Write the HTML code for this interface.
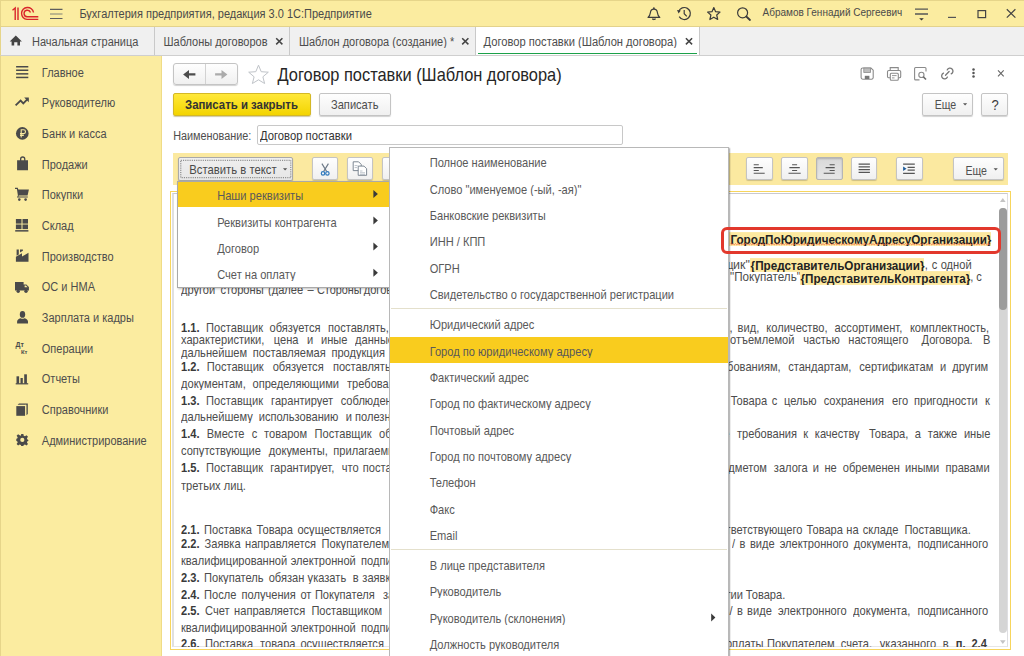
<!DOCTYPE html>
<html><head><meta charset="utf-8">
<style>
*{margin:0;padding:0;box-sizing:border-box}
html,body{width:1024px;height:656px;overflow:hidden;background:#fff}
body{font-family:"Liberation Sans",sans-serif;font-size:11px;color:#4d4d4d;position:relative}
.a{position:absolute}
.t{position:absolute;white-space:nowrap;line-height:16px;height:16px;transform:scaleY(1.15);transform-origin:0 50%;margin-top:-0.5px}
svg{position:absolute;overflow:visible}
/* top bar */
#top{left:0;top:0;width:1024px;height:27px;background:#fbeca0;border-top:1px solid #e6d58a;border-left:1px solid #e6d58a;border-bottom:1px solid #e3d28c}
#tabs{left:0;top:27px;width:1024px;height:29px;background:#f0f0f0;border-left:1px solid #e6d58a;border-bottom:1px solid #cfcfcf}
.tsep{position:absolute;top:27px;width:1px;height:28px;background:#c9c9c9}
#side{left:0;top:56px;width:162px;height:600px;background:#fbeca0;border-left:1px solid #e6d58a;border-right:1px solid #f0dc86}
.w{position:absolute;white-space:nowrap;transform-origin:0 50%;transform:scaleY(1.15);height:16px;margin-top:-1px;line-height:16px;font-size:11.1px;color:#4c4c4c}
.b{font-weight:bold;color:#3a3a3a}
.h{font-weight:bold;font-size:11.7px;color:#222;background:#fde9a0;line-height:12px;height:12px;margin-top:2.2px;padding-left:1px;margin-left:-1px}
.btn{position:absolute;border:1px solid #c4c4c4;border-radius:2px;background:linear-gradient(#fefefe,#f0f0f0);box-shadow:0 1px 1px rgba(0,0,0,.18)}
</style></head><body>

<!-- TOP BAR -->
<div id="top" class="a"></div>
<svg style="left:0;top:0" width="1024" height="27">
 <g fill="none" stroke="#d9252b" stroke-width="1.4">
  <path d="M12.5 10.2 L15.2 8 L15.2 20"/>
  <path d="M18 7.5 L18 20"/>
  <path d="M33.5 12.5 A6 6 0 1 0 27 19.4 L38.3 19.4"/>
  <path d="M30.5 12.5 A3.3 3.3 0 1 0 27 16.8 L38.3 16.8"/>
 </g>
 <g stroke="#5e5e5e" stroke-width="1.1">
  <path d="M50 9.4 H62.5 M50 18.5 H62.5"/>
 </g>
 <path d="M50 14 H62.5" stroke="#8a8a7a" stroke-width="1.1"/>
 <!-- bell -->
 <path d="M648 17.4 H659.8 C658.2 16 657.6 14.3 657.4 12.6 C657.2 10.4 656 9.1 653.9 9.1 C651.8 9.1 650.6 10.4 650.4 12.6 C650.2 14.3 649.6 16 648 17.4 Z" fill="none" stroke="#3c3c3c" stroke-width="1.15" stroke-linejoin="round"/>
 <circle cx="653.9" cy="8.2" r="0.9" fill="#3c3c3c"/>
 <path d="M652.2 19 Q653.9 20.5 655.6 19 Z" fill="#3c3c3c" stroke="#3c3c3c" stroke-width="0.8"/>
 <!-- history -->
 <g fill="none" stroke="#3c3c3c" stroke-width="1.2">
  <path d="M678.6 11.8 A6 6 0 1 1 679.2 16.6"/>
  <path d="M684.2 10 V13.7 L686.8 16.3"/>
 </g>
 <path d="M677 10 L680.8 10.4 L678.6 13.4 Z" fill="#3c3c3c"/>
 <!-- star -->
 <path d="M713.8 7.6 L715.6 11.7 L720 12.1 L716.7 15 L717.7 19.5 L713.8 17.2 L709.9 19.5 L710.9 15 L707.6 12.1 L712 11.7 Z" fill="none" stroke="#3c3c3c" stroke-width="1.2" stroke-linejoin="round"/>
 <!-- search -->
 <circle cx="742.6" cy="12.8" r="5" fill="none" stroke="#3c3c3c" stroke-width="1.2"/>
 <path d="M746.3 16.5 L750 20" stroke="#3c3c3c" stroke-width="1.8" stroke-linecap="round"/>
 <!-- menu -->
 <g stroke="#555" stroke-width="1.3"><path d="M915 9.2 H928 M915 14 H928"/></g>
 <path d="M919.2 18.2 H923.8 L921.5 20.6 Z" fill="#333"/>
 <!-- window controls -->
 <path d="M948 17.4 H956" stroke="#555" stroke-width="1.2"/>
 <rect x="978" y="10.6" width="7.6" height="7" fill="none" stroke="#444" stroke-width="1.2"/>
 <path d="M1006.8 9.2 L1015.4 17.6 M1015.4 9.2 L1006.8 17.6" stroke="#444" stroke-width="1.2"/>
</svg>
<div class="t" style="left:79.4px;top:5.4px;color:#4a4a4a">Бухгалтерия предприятия, редакция 3.0 1С:Предприятие</div>
<div class="t" style="left:762.5px;top:5.5px;font-size:10px;color:#4a4a4a">Абрамов Геннадий Сергеевич</div>

<!-- TABS -->
<div id="tabs" class="a"></div>
<div class="a" style="left:476px;top:27px;width:223px;height:28px;background:#fff"></div>
<div class="a" style="left:477.5px;top:52.6px;width:219.5px;height:1.8px;background:#1ba149"></div>
<div class="tsep" style="left:154px"></div>
<div class="tsep" style="left:289px"></div>
<div class="tsep" style="left:475px"></div>
<div class="tsep" style="left:699px"></div>
<svg style="left:0;top:27px" width="1024" height="29">
 <path d="M9.7 14.5 L15.8 8.6 L21.9 14.5 H20 V18.6 H17.4 V15.2 H14.2 V18.6 H11.6 V14.5 Z" fill="#444"/>
 <g stroke="#444" stroke-width="1.5">
  <path d="M276.2 11.2 L282.4 17.4 M282.4 11.2 L276.2 17.4"/>
  <path d="M462.2 11.2 L468.4 17.4 M468.4 11.2 L462.2 17.4"/>
  <path d="M685.9 11.2 L692.1 17.4 M692.1 11.2 L685.9 17.4"/>
 </g>
</svg>
<div class="t" style="left:32px;top:33.6px">Начальная страница</div>
<div class="t" style="left:163.5px;top:33.8px">Шаблоны договоров</div>
<div class="t" style="left:298.9px;top:33.8px">Шаблон договора (создание) *</div>
<div class="t" style="left:483.6px;top:33.8px;font-size:11.17px">Договор поставки (Шаблон договора)</div>
<!-- SIDEBAR -->
<div id="side" class="a"></div>
<svg style="left:0;top:0" width="162" height="656">
 <g fill="#4a4a4a" stroke="none">
  <!-- main -->
  <rect x="16.1" y="66" width="12.2" height="1.5"/><rect x="16.1" y="69.5" width="12.2" height="1.5"/><rect x="16.1" y="73.1" width="12.2" height="1.5"/><rect x="16.1" y="76.7" width="12.2" height="1.5"/>
  <!-- ruble -->
  <circle cx="22.3" cy="133.4" r="6.3"/>
  <!-- bag -->
  <path d="M17.1 160.3 H20 V159 A2.5 2.5 0 0 1 25.4 159 V160.3 H28 V170.3 H17.1 Z M21.3 160.3 H24.1 V159.2 A1.4 1.4 0 0 0 21.3 159.2 Z" fill-rule="evenodd"/>
  <!-- cart -->
  <path d="M15 187.8 H17.8 L18.3 189.6 H28.9 L27.6 195.6 H18.9 L18.3 196.6 H27.8 V197.6 H16.9 L17.9 195.6 L16.9 189 H15 Z"/>
  <circle cx="19.3" cy="199.6" r="1.3"/><circle cx="25.6" cy="199.6" r="1.3"/>
  <!-- sklad -->
  <rect x="15.9" y="219" width="5.6" height="4.6"/><rect x="22.5" y="219" width="5.5" height="4.6"/>
  <rect x="15.9" y="224.5" width="5.6" height="4.6"/><rect x="22.5" y="224.5" width="5.5" height="4.6"/>
  <rect x="15.2" y="230.1" width="13.2" height="1.5"/>
  <!-- factory -->
  <path d="M15.9 256.8 L22 253.3 V256.6 L28.5 252.8 V261.8 H15.9 Z"/>
  <path d="M16.6 249.6 H18.8 V254.6 L16.6 255.8 Z"/><path d="M20 249.6 H22.9 L22.9 250.8 L20 252.6 Z"/>
  <!-- truck -->
  <path d="M15 281.9 H23.6 V284.4 H26.4 L28.9 287 V290.6 H15 Z"/>
  <circle cx="18.2" cy="291.2" r="1.7"/><circle cx="26" cy="291.2" r="1.7"/>
  <!-- person -->
  <ellipse cx="22.5" cy="314.4" rx="2.7" ry="3.4"/>
  <path d="M17.1 323.6 V321.5 C17.1 319.4 19.4 318.4 20.8 318.2 C21.6 319 23.4 319 24.2 318.2 C25.8 318.4 28 319.4 28 321.5 V323.6 Z"/>
  <!-- chart -->
  <rect x="16.5" y="376.3" width="2.6" height="7.4"/><rect x="20.5" y="378" width="2.3" height="5.7"/><rect x="24.2" y="374.3" width="2.7" height="9.4"/>
  <rect x="15.7" y="383.2" width="12.5" height="1.2"/>
  <!-- books -->
  <rect x="16.3" y="406.1" width="8.8" height="9.7"/>
  <path d="M17.6 404.8 L19 403.4 H27.8 V413.9 L26.4 415.3 V404.8 Z"/>
 </g>
 <g fill="none" stroke="#4a4a4a">
  <path d="M15.6 105.4 L20.6 100.6 L23.3 103.4 L28 98.7" stroke-width="1.8"/>
 </g>
 <path d="M24.2 97.6 H28.8 V102.2 Z" fill="#4a4a4a"/>
 <!-- ruble sign -->
 <path d="M21.2 137.4 V129.8 H23.6 A1.9 1.9 0 0 1 23.6 133.6 H20 M20 135.4 H23.8" fill="none" stroke="#fbeca0" stroke-width="1.1"/>
 <!-- books gap -->
 <path d="M25.7 404.7 V415.8" stroke="#fbeca0" stroke-width="0.6"/>
 <!-- truck window -->
 <path d="M24.6 285.4 H26 L27.6 287.2 H24.6 Z" fill="#fbeca0"/>
 <!-- DT KT -->
 <text x="15.6" y="346.9" font-family="Liberation Sans" font-weight="bold" font-size="6.9" fill="#4a4a4a">Дт</text>
 <text x="21" y="354.3" font-family="Liberation Sans" font-weight="bold" font-size="5.9" fill="#4a4a4a">Кт</text>
 <!-- gear -->
 <g transform="translate(22.3 439.9)">
  <path d="M-1.1 -6 H1.1 L1.4 -4.2 L2.7 -3.6 L4.2 -4.7 L5.7 -3.2 L4.6 -1.6 L5.1 -0.3 L6 0 V1.1 L5.1 1.3 L4.6 2.6 L5.7 4.2 L4.2 5.7 L2.7 4.6 L1.4 5.2 L1.1 6 H-1.1 L-1.4 5.2 L-2.7 4.6 L-4.2 5.7 L-5.7 4.2 L-4.6 2.6 L-5.1 1.3 L-6 1.1 V-1.1 L-5.1 -1.3 L-4.6 -2.6 L-5.7 -4.2 L-4.2 -5.7 L-2.7 -4.6 L-1.4 -4.2 Z" fill="#4a4a4a"/>
  <circle cx="0" cy="0" r="2.1" fill="#fbeca0"/>
 </g>
</svg>
<div class="t" style="left:41.8px;top:64px">Главное</div>
<div class="t" style="left:41.8px;top:94.67px">Руководителю</div>
<div class="t" style="left:41.8px;top:125.33px">Банк и касса</div>
<div class="t" style="left:41.8px;top:156px">Продажи</div>
<div class="t" style="left:41.8px;top:186.67px">Покупки</div>
<div class="t" style="left:41.8px;top:217.33px">Склад</div>
<div class="t" style="left:41.8px;top:248px">Производство</div>
<div class="t" style="left:41.8px;top:278.67px">ОС и НМА</div>
<div class="t" style="left:41.8px;top:309.33px">Зарплата и кадры</div>
<div class="t" style="left:41.8px;top:340px">Операции</div>
<div class="t" style="left:41.8px;top:370.67px">Отчеты</div>
<div class="t" style="left:41.8px;top:401.33px">Справочники</div>
<div class="t" style="left:41.8px;top:432px">Администрирование</div>

<!-- FORM HEADER -->
<div class="btn" style="left:172.6px;top:63.3px;width:65.1px;height:21.5px;border-radius:3px"></div>
<div class="a" style="left:205px;top:64px;width:1px;height:20px;background:#d2d2d2"></div>
<svg style="left:0;top:0" width="1024" height="200">
 <path d="M183.1 74.4 L189 70 V73.3 H195.4 V75.5 H189 V78.9 Z" fill="#4d4d4d"/>
 <path d="M227.4 74.4 L221.5 70 V73.3 H215.1 V75.5 H221.5 V78.9 Z" fill="#ababab"/>
 <path d="M258.5 65.2 L261.2 71.7 L268.3 72.2 L262.9 76.8 L264.6 83.5 L258.5 79.8 L252.4 83.5 L254.1 76.8 L248.7 72.2 L255.8 71.7 Z" fill="none" stroke="#bfc3c8" stroke-width="1" stroke-linejoin="miter"/>
 <!-- save -->
 <g fill="none" stroke="#8a8a8a" stroke-width="1.1">
  <path d="M861.1 69.6 A1.6 1.6 0 0 1 862.7 68 H871 L873.2 70.2 V77.6 A1.6 1.6 0 0 1 871.6 79.2 H862.7 A1.6 1.6 0 0 1 861.1 77.6 Z"/>
 </g>
 <rect x="863.8" y="68" width="6.8" height="4.4" fill="#bdbdbd" stroke="#8a8a8a" stroke-width="0.8"/>
 <rect x="864.8" y="75.8" width="4.6" height="3.2" fill="#777"/>
 <!-- print -->
 <g fill="none" stroke="#8a8a8a" stroke-width="1.1">
  <path d="M890.2 70.5 V67.6 H898.2 V70.5"/>
  <path d="M890.2 77.8 H888.6 A1.3 1.3 0 0 1 887.5 76.5 V71.8 A1.3 1.3 0 0 1 888.8 70.5 H899.4 A1.3 1.3 0 0 1 900.7 71.8 V76.5 A1.3 1.3 0 0 1 899.4 77.8 H898.2"/>
  <rect x="890.3" y="73.2" width="8" height="7.1" rx="1" fill="#fff"/>
  <path d="M892 75.6 H896.6 M892 77.9 H894.5" stroke-width="0.9"/>
 </g>
 <!-- preview -->
 <g fill="none" stroke="#8a8a8a" stroke-width="1.1">
  <path d="M919.5 79.9 H915.6 A1 1 0 0 1 914.6 78.9 V68.5 A1 1 0 0 1 915.6 67.5 H925 A1 1 0 0 1 926 68.5 V71.5"/>
  <circle cx="921.4" cy="74.9" r="2.6"/>
  <path d="M923.3 76.8 L926 79.5" stroke-width="1.6" stroke="#6a6a6a"/>
 </g>
 <!-- link -->
 <g fill="none" stroke="#777" stroke-width="1.3" stroke-linecap="round">
  <path d="M947.2 69.9 A3 3 0 1 1 951.2 73.8"/>
  <path d="M943.5 73.1 A3 3 0 1 0 947.4 77.1"/>
  <path d="M945.5 75.3 L949.1 71.5"/>
 </g>
 <!-- dots -->
 <g fill="#555"><circle cx="973.5" cy="69.4" r="1.25"/><circle cx="973.5" cy="72.9" r="1.25"/><circle cx="973.5" cy="76.5" r="1.25"/></g>
 <path d="M998 70.3 L1003.7 76.4 M1003.7 70.3 L998 76.4" stroke="#666" stroke-width="1.1"/>
</svg>
<div class="t" style="left:277.5px;top:64px;height:20px;line-height:20px;font-size:16.4px;color:#262626">Договор поставки (Шаблон договора)</div>

<div class="a" style="left:172.5px;top:92.7px;width:138.3px;height:23.5px;border:1px solid #d4b826;border-radius:2px;background:linear-gradient(#ffe83a,#f3d400);box-shadow:0 1px 1px rgba(120,100,0,.35)"></div>
<div class="t" style="left:185px;top:96px;font-weight:bold;font-size:11.4px;color:#333">Записать и закрыть</div>
<div class="btn" style="left:319px;top:92.7px;width:72.4px;height:23.4px"></div>
<div class="t" style="left:331px;top:96px;font-size:11.1px;color:#4d4d4d">Записать</div>

<div class="btn" style="left:922.4px;top:92.6px;width:50.8px;height:23.6px"></div>
<div class="t" style="left:934.7px;top:96.8px;font-size:10.6px;color:#505050">Еще</div>
<svg style="left:0;top:0" width="1024" height="200"><path d="M963 103.2 H967.2 L965.1 105.4 Z" fill="#555"/></svg>
<div class="btn" style="left:981.4px;top:92.6px;width:26.6px;height:23.6px"></div>
<div class="t" style="left:991.6px;top:97px;font-size:13px;color:#3a3a3a">?</div>

<div class="t" style="left:173.2px;top:127.2px;font-size:10.85px">Наименование:</div>
<div class="a" style="left:256.9px;top:125px;width:366px;height:19.5px;border:1px solid #c8c8c8;border-radius:2px;background:#fff"></div>
<div class="t" style="left:260px;top:127.2px;font-size:11.25px;color:#333">Договор поставки</div>

<!-- TOOLBAR -->
<div class="a" style="left:172.9px;top:152.8px;width:835.2px;height:32.2px;background:#fbe9a0"></div>
<div class="btn" style="left:177.8px;top:157.2px;width:115.7px;height:23.4px;background:linear-gradient(#efefef,#e6e6e6);border-color:#a9a9a9;box-shadow:0 1px 1px rgba(0,0,0,.3)"></div>
<svg style="left:0;top:0" width="300" height="200"><rect x="180.8" y="160.3" width="110" height="17.4" fill="none" stroke="#6a6a6a" stroke-width="0.9" stroke-dasharray="1.1 1.1"/></svg>
<div class="t" style="left:189.3px;top:161.2px;font-size:11.29px;color:#4a4a4a">Вставить в текст</div>
<div class="btn" style="left:312px;top:157.3px;width:26.4px;height:23px"></div>
<div class="btn" style="left:346.8px;top:157.3px;width:26.6px;height:23px"></div>
<div class="btn" style="left:382px;top:157.3px;width:26.6px;height:23px"></div>
<div class="btn" style="left:746.2px;top:157.3px;width:26.4px;height:23px"></div>
<div class="btn" style="left:781.2px;top:157.3px;width:26.4px;height:23px"></div>
<div class="btn" style="left:816px;top:157.3px;width:26.6px;height:23px;background:linear-gradient(#d9d9d9,#e6e6e6);border-color:#b5b5b5;box-shadow:inset 0 1px 2px rgba(0,0,0,.2)"></div>
<div class="btn" style="left:851.1px;top:157.3px;width:26.4px;height:23px"></div>
<div class="btn" style="left:896px;top:157.3px;width:26.6px;height:23px"></div>
<div class="btn" style="left:953.3px;top:157.3px;width:50.3px;height:23px"></div>
<div class="t" style="left:965.4px;top:162.6px;font-size:10.6px;color:#505050">Еще</div>
<svg style="left:0;top:0" width="1024" height="200">
 <path d="M283 168.3 H287.2 L285.1 170.5 Z" fill="#555"/>
 <path d="M993.6 168.3 H997.8 L995.7 170.5 Z" fill="#555"/>
 <!-- scissors -->
 <g fill="none" stroke-width="1.1">
  <path d="M321.9 163.6 L326.6 171.4 M328.4 163.6 L323.7 171.4" stroke="#6b7886"/>
  <circle cx="323" cy="173.4" r="1.7" stroke="#2f79bd" stroke-width="1.2"/>
  <circle cx="327.4" cy="173.4" r="1.7" stroke="#2f79bd" stroke-width="1.2"/>
 </g>
 <!-- copy -->
 <g fill="#fff" stroke="#6f7c88" stroke-width="0.9">
  <path d="M353.2 161.8 H358.6 L361.2 164.4 V170.6 H353.2 Z"/>
  <path d="M358.2 166.1 H364 L366.6 168.7 V175.3 H358.2 Z"/>
 </g>
 <g stroke="#a9b2bb" stroke-width="0.8"><path d="M354.6 165.6 H357.6 M354.6 167.6 H357 M360 171 H362.5 M360 172.8 H365 M360 174.4 H365"/></g>
 <!-- align icons -->
 <g stroke="#555" stroke-width="1.1">
  <path d="M753.7 164.7 H758.8 M753.7 167.6 H762.8 M753.7 170.5 H758.8 M753.7 173.3 H764.7"/>
  <path d="M792.1 164.7 H797.1 M789.4 167.6 H799.8 M792.1 170.5 H797.1 M788.5 173.3 H800.7"/>
  <path d="M829.6 164.7 H834.7 M825.6 167.6 H834.7 M829.6 170.5 H834.7 M823.7 173.3 H834.7"/>
  <path d="M858.6 164.2 H869.9 M858.6 166.9 H869.9 M858.6 169.6 H869.9 M858.6 172.3 H869.9" stroke-width="1.2"/>
  <path d="M903.1 164.2 H914.8 M907.6 167.3 H914.8 M907.6 170.2 H914.8 M903.1 173.3 H914.8" stroke-width="1.2"/>
 </g>
 <path d="M903.1 166.6 L906.5 168.8 L903.1 171 Z" fill="#1d5b9a"/>
</svg>

<!-- EDITOR -->
<div class="a" style="left:170.4px;top:191px;width:840.4px;height:459px;border:1.2px solid #f7d55c;background:#fff"></div>
<div class="a" style="left:172px;top:192.6px;width:836.4px;height:454.6px;border-left:2px solid #e0e0e0;border-top:1.4px solid #c9c9cf;border-right:1.2px solid #dedee2;border-bottom:1px solid #e6e6e6"></div>
<!-- scrollbar -->
<div class="a" style="left:999.2px;top:208px;width:7.8px;height:424.6px;background:#d5d5d5;border-radius:3.9px"></div>
<div class="a" style="left:999.2px;top:208px;width:7.8px;height:102.4px;background:#9c9c9c;border-radius:3.9px"></div>
<svg style="left:0;top:0" width="1024" height="656">
 <path d="M1000 201.9 L1002.8 198 L1005.6 201.9 Z" fill="#c4c4c4"/>
 <path d="M1000 640.2 L1002.8 644.1 L1005.6 640.2 Z" fill="#c4c4c4"/>
</svg>
<div class="a" style="left:174px;top:193.6px;width:824px;height:453px;overflow:hidden">
<div class="a" style="left:-174px;top:-193.6px;width:1024px;height:656px">
<span class="w h" style="left:730.4px;top:231.3px">ГородПоЮридическомуАдресуОрганизации}</span>
<span class="w" style="left:687.1px;top:256.8px;transform:scale(1.013,1.15)">Поставщ</span>
<span class="w" style="left:733.0px;top:256.8px;transform:scale(1.120,1.15)">ик"</span>
<span class="w h" style="left:750.6px;top:256.8px">{ПредставительОрганизации}</span>
<span class="w" style="left:924.7px;top:256.8px">,</span>
<span class="w" style="left:931.8px;top:256.8px">с</span>
<span class="w" style="left:940.7px;top:256.8px">одной</span>
<span class="w" style="left:730.2px;top:269.4px;transform:scale(1.050,1.15)">"Покупатель"</span>
<span class="w h" style="left:800.5px;top:269.4px">{ПредставительКонтрагента}</span>
<span class="w" style="left:970.3px;top:269.4px">,</span>
<span class="w" style="left:976.2px;top:269.4px">с</span>
<span class="w" style="left:181.0px;top:282.0px">другой</span>
<span class="w" style="left:220.5px;top:282.0px">стороны</span>
<span class="w" style="left:268.0px;top:282.0px">(далее</span>
<span class="w" style="left:307.6px;top:282.0px">–</span>
<span class="w" style="left:317.2px;top:282.0px;transform:scale(0.979,1.15)">Стороны</span>
<span class="w" style="left:363.7px;top:282.0px">договора).</span>
<span class="w b" style="left:181.0px;top:319.6px">1.1.</span>
<span class="w" style="left:206.1px;top:319.6px">Поставщик</span>
<span class="w" style="left:269.5px;top:319.6px">обязуется</span>
<span class="w" style="left:328.0px;top:319.6px">поставлять,</span>
<span class="w" style="left:729.4px;top:319.6px">,</span>
<span class="w" style="left:737.6px;top:319.6px">вид,</span>
<span class="w" style="left:766.3px;top:319.6px">количество,</span>
<span class="w" style="left:834.6px;top:319.6px">ассортимент,</span>
<span class="w" style="left:909.9px;top:319.6px">комплектность,</span>
<span class="w" style="left:181.0px;top:332.2px">характеристики,</span>
<span class="w" style="left:273.8px;top:332.2px">цена</span>
<span class="w" style="left:307.0px;top:332.2px">и</span>
<span class="w" style="left:321.0px;top:332.2px">иные</span>
<span class="w" style="left:355.0px;top:332.2px">данные</span>
<span class="w" style="left:730.0px;top:332.2px">отъемлемой</span>
<span class="w" style="left:803.2px;top:332.2px">частью</span>
<span class="w" style="left:848.3px;top:332.2px">настоящего</span>
<span class="w" style="left:921.5px;top:332.2px">Договора.</span>
<span class="w" style="left:983.1px;top:332.2px">В</span>
<span class="w" style="left:181.0px;top:345.0px">дальнейшем</span>
<span class="w" style="left:252.8px;top:345.0px">поставляемая</span>
<span class="w" style="left:331.4px;top:345.0px">продукция</span>
<span class="w b" style="left:181.0px;top:358.5px">1.2.</span>
<span class="w" style="left:206.8px;top:358.5px">Поставщик</span>
<span class="w" style="left:272.7px;top:358.5px">обязуется</span>
<span class="w" style="left:332.9px;top:358.5px">поставлять</span>
<span class="w" style="left:709.8px;top:358.5px">требованиям,</span>
<span class="w" style="left:788.2px;top:358.5px">стандартам,</span>
<span class="w" style="left:859.3px;top:358.5px">сертификатам</span>
<span class="w" style="left:940.0px;top:358.5px">и</span>
<span class="w" style="left:952.3px;top:358.5px">другим</span>
<span class="w" style="left:181.0px;top:375.5px">документам,</span>
<span class="w" style="left:252.5px;top:375.5px">определяющими</span>
<span class="w" style="left:347.0px;top:375.5px">требования</span>
<span class="w b" style="left:181.0px;top:392.5px">1.3.</span>
<span class="w" style="left:206.1px;top:392.5px">Поставщик</span>
<span class="w" style="left:271.1px;top:392.5px">гарантирует</span>
<span class="w" style="left:340.7px;top:392.5px">соблюдение</span>
<span class="w" style="left:730.7px;top:392.5px">Товара</span>
<span class="w" style="left:771.8px;top:392.5px">с</span>
<span class="w" style="left:784.0px;top:392.5px">целью</span>
<span class="w" style="left:823.7px;top:392.5px">сохранения</span>
<span class="w" style="left:892.1px;top:392.5px">его</span>
<span class="w" style="left:914.0px;top:392.5px">пригодности</span>
<span class="w" style="left:985.1px;top:392.5px">к</span>
<span class="w" style="left:181.0px;top:409.0px">дальнейшему</span>
<span class="w" style="left:258.7px;top:409.0px">использованию</span>
<span class="w" style="left:345.7px;top:409.0px">и</span>
<span class="w" style="left:355.0px;top:409.0px">полезных</span>
<span class="w b" style="left:181.0px;top:426.2px">1.4.</span>
<span class="w" style="left:206.8px;top:426.2px">Вместе</span>
<span class="w" style="left:251.7px;top:426.2px">с</span>
<span class="w" style="left:264.1px;top:426.2px">товаром</span>
<span class="w" style="left:314.6px;top:426.2px">Поставщик</span>
<span class="w" style="left:379.1px;top:426.2px">обязан</span>
<span class="w" style="left:703.0px;top:426.2px">иные</span>
<span class="w" style="left:736.9px;top:426.2px">требования</span>
<span class="w" style="left:803.2px;top:426.2px">к</span>
<span class="w" style="left:814.8px;top:426.2px">качеству</span>
<span class="w" style="left:868.9px;top:426.2px">Товара,</span>
<span class="w" style="left:914.7px;top:426.2px">а</span>
<span class="w" style="left:927.7px;top:426.2px">также</span>
<span class="w" style="left:963.9px;top:426.2px">иные</span>
<span class="w" style="left:181.0px;top:442.5px">сопутствующие</span>
<span class="w" style="left:268.8px;top:442.5px">документы,</span>
<span class="w" style="left:333.3px;top:442.5px">прилагаемые</span>
<span class="w b" style="left:181.0px;top:460.2px">1.5.</span>
<span class="w" style="left:206.1px;top:460.2px">Поставщик</span>
<span class="w" style="left:270.3px;top:460.2px">гарантирует,</span>
<span class="w" style="left:341.8px;top:460.2px">что</span>
<span class="w" style="left:362.8px;top:460.2px">поставляемый</span>
<span class="w" style="left:710.2px;top:460.2px">предметом</span>
<span class="w" style="left:773.8px;top:460.2px">залога</span>
<span class="w" style="left:812.8px;top:460.2px">и</span>
<span class="w" style="left:824.4px;top:460.2px">не</span>
<span class="w" style="left:842.8px;top:460.2px">обременен</span>
<span class="w" style="left:905.1px;top:460.2px">иными</span>
<span class="w" style="left:945.5px;top:460.2px">правами</span>
<span class="w" style="left:181.0px;top:477.5px">третьих</span>
<span class="w" style="left:223.8px;top:477.5px">лиц.</span>
<span class="w b" style="left:181.0px;top:521.5px">2.1.</span>
<span class="w" style="left:204.0px;top:521.5px">Поставка</span>
<span class="w" style="left:256.6px;top:521.5px">Товара</span>
<span class="w" style="left:297.4px;top:521.5px">осуществляется</span>
<span class="w" style="left:707.8px;top:521.5px">соответствующего</span>
<span class="w" style="left:806.6px;top:521.5px">Товара</span>
<span class="w" style="left:846.3px;top:521.5px">на</span>
<span class="w" style="left:862.7px;top:521.5px">складе</span>
<span class="w" style="left:904.4px;top:521.5px">Поставщика.</span>
<span class="w b" style="left:181.0px;top:535.8px">2.2.</span>
<span class="w" style="left:204.6px;top:535.8px">Заявка</span>
<span class="w" style="left:245.0px;top:535.8px">направляется</span>
<span class="w" style="left:321.5px;top:535.8px">Покупателем</span>
<span class="w" style="left:732.1px;top:535.8px">/</span>
<span class="w" style="left:739.6px;top:535.8px">в</span>
<span class="w" style="left:749.9px;top:535.8px">виде</span>
<span class="w" style="left:779.7px;top:535.8px">электронного</span>
<span class="w" style="left:853.8px;top:535.8px">документа,</span>
<span class="w" style="left:917.4px;top:535.8px">подписанного</span>
<span class="w" style="left:181.0px;top:552.5px">квалифицированной</span>
<span class="w" style="left:290.7px;top:552.5px">электронной</span>
<span class="w" style="left:361.1px;top:552.5px">подписью</span>
<span class="w b" style="left:181.0px;top:570.2px">2.3.</span>
<span class="w" style="left:204.0px;top:570.2px">Покупатель</span>
<span class="w" style="left:268.7px;top:570.2px">обязан</span>
<span class="w" style="left:307.6px;top:570.2px">указать</span>
<span class="w" style="left:352.8px;top:570.2px">в</span>
<span class="w" style="left:362.3px;top:570.2px">заявке</span>
<span class="w b" style="left:181.0px;top:586.9px">2.4.</span>
<span class="w" style="left:204.0px;top:586.9px">После</span>
<span class="w" style="left:241.5px;top:586.9px">получения</span>
<span class="w" style="left:300.4px;top:586.9px">от</span>
<span class="w" style="left:314.9px;top:586.9px">Покупателя</span>
<span class="w" style="left:383.0px;top:586.9px">заявки</span>
<span class="w" style="left:707.4px;top:586.9px">партии</span>
<span class="w" style="left:745.8px;top:586.9px">Товара.</span>
<span class="w b" style="left:181.0px;top:603.4px">2.5.</span>
<span class="w" style="left:205.1px;top:603.4px">Счет</span>
<span class="w" style="left:234.1px;top:603.4px">направляется</span>
<span class="w" style="left:311.4px;top:603.4px">Поставщиком</span>
<span class="w" style="left:729.5px;top:603.4px">/</span>
<span class="w" style="left:736.9px;top:603.4px">в</span>
<span class="w" style="left:747.1px;top:603.4px">виде</span>
<span class="w" style="left:777.9px;top:603.4px">электронного</span>
<span class="w" style="left:853.1px;top:603.4px">документа,</span>
<span class="w" style="left:917.4px;top:603.4px">подписанного</span>
<span class="w" style="left:181.0px;top:619.8px">квалифицированной</span>
<span class="w" style="left:290.7px;top:619.8px">электронной</span>
<span class="w" style="left:361.1px;top:619.8px">подписью</span>
<span class="w b" style="left:181.0px;top:636.2px">2.6.</span>
<span class="w" style="left:205.1px;top:636.2px">Поставка</span>
<span class="w" style="left:260.1px;top:636.2px">товара</span>
<span class="w" style="left:300.4px;top:636.2px">осуществляется</span>
<span class="w" style="left:725.9px;top:636.2px">оплаты</span>
<span class="w" style="left:767.0px;top:636.2px">Покупателем</span>
<span class="w" style="left:840.8px;top:636.2px">счета,</span>
<span class="w" style="left:879.8px;top:636.2px">указанного</span>
<span class="w" style="left:942.7px;top:636.2px">в</span>
<span class="w b" style="left:955.7px;top:636.2px">п.</span>
<span class="w b" style="left:971.4px;top:636.2px">2.4</span>
</div>
</div>

<!-- POPUP 1 -->
<div class="a" style="left:177px;top:180.6px;width:213px;height:107px;background:#fff;border:1px solid #a9a9a9;box-shadow:1px 1px 2px rgba(0,0,0,.25)"></div>
<div class="a" style="left:178px;top:181.9px;width:211.5px;height:25.6px;background:#f9cc1e"></div>
<div class="t" style="color:#595959;font-size:11.1px;left:217.2px;top:187.6px">Наши реквизиты</div>
<div class="t" style="color:#595959;font-size:11.1px;left:217.2px;top:214.1px">Реквизиты контрагента</div>
<div class="t" style="color:#595959;font-size:11.1px;left:217.2px;top:240.1px">Договор</div>
<div class="t" style="color:#595959;font-size:11.1px;left:217.2px;top:266.4px">Счет на оплату</div>
<svg style="left:0;top:0" width="1024" height="656"><g fill="#3a3a3a"><path d="M373.4 190.0 L377.9 194.0 L373.4 198.0 Z"/><path d="M373.4 216.5 L377.9 220.5 L373.4 224.5 Z"/><path d="M373.4 242.5 L377.9 246.5 L373.4 250.5 Z"/><path d="M373.4 268.8 L377.9 272.8 L373.4 276.8 Z"/></g></svg>
<!-- SUBMENU -->
<div class="a" style="left:388.8px;top:147.2px;width:340.2px;height:520px;background:#fff;border:1px solid #b8b8b8;box-shadow:1px 1px 1.2px rgba(0,0,0,.35)"></div>
<div class="a" style="left:391px;top:307.6px;width:336px;height:1px;background:#e4e0cc"></div>
<div class="a" style="left:391px;top:548.5px;width:336px;height:1px;background:#e4e0cc"></div>
<div class="t" style="color:#595959;font-size:11.1px;left:429.7px;top:154.7px">Полное наименование</div>
<div class="t" style="color:#595959;font-size:11.1px;left:429.7px;top:181.2px">Слово &quot;именуемое (-ый, -ая)&quot;</div>
<div class="t" style="color:#595959;font-size:11.1px;left:429.7px;top:207.4px">Банковские реквизиты</div>
<div class="t" style="color:#595959;font-size:11.1px;left:429.7px;top:233.7px">ИНН / КПП</div>
<div class="t" style="color:#595959;font-size:11.1px;left:429.7px;top:260.1px">ОГРН</div>
<div class="t" style="color:#595959;font-size:11.1px;left:429.7px;top:286.7px">Свидетельство о государственной регистрации</div>
<div class="t" style="color:#595959;font-size:11.1px;left:429.7px;top:316.7px">Юридический адрес</div>
<div class="a" style="left:390px;top:337.1px;width:338px;height:25.5px;background:#f9cc1e"></div>
<div class="t" style="color:#595959;font-size:11.1px;left:429.7px;top:343.2px">Город по юридическому адресу</div>
<div class="t" style="color:#595959;font-size:11.1px;left:429.7px;top:369.3px">Фактический адрес</div>
<div class="t" style="color:#595959;font-size:11.1px;left:429.7px;top:395.7px">Город по фактическому адресу</div>
<div class="t" style="color:#595959;font-size:11.1px;left:429.7px;top:422.1px">Почтовый адрес</div>
<div class="t" style="color:#595959;font-size:11.1px;left:429.7px;top:448.5px">Город по почтовому адресу</div>
<div class="t" style="color:#595959;font-size:11.1px;left:429.7px;top:474.7px">Телефон</div>
<div class="t" style="color:#595959;font-size:11.1px;left:429.7px;top:501.0px">Факс</div>
<div class="t" style="color:#595959;font-size:11.1px;left:429.7px;top:527.6px">Email</div>
<div class="t" style="color:#595959;font-size:11.1px;left:429.7px;top:557.1px">В лице представителя</div>
<div class="t" style="color:#595959;font-size:11.1px;left:429.7px;top:583.7px">Руководитель</div>
<div class="t" style="color:#595959;font-size:11.1px;left:429.7px;top:610.1px">Руководитель (склонения)</div>
<svg style="left:0;top:0" width="1024" height="656"><path d="M711.2 613.4 L715.4 617.4 L711.2 621.4 Z" fill="#3a3a3a"/></svg>
<div class="t" style="color:#595959;font-size:11.1px;left:429.7px;top:636.4px">Должность руководителя</div>
<!-- RED BOX -->
<div class="a" style="left:720.5px;top:227px;width:280px;height:27px;border:3px solid #e2382c;border-radius:6px"></div>
<svg style="left:0;top:0" width="1024" height="656"><path d="M730.5 243.6 l1.25 1.2l1.25 -1.2l1.25 1.2l1.25 -1.2l1.25 1.2l1.25 -1.2l1.25 1.2l1.25 -1.2l1.25 1.2l1.25 -1.2l1.25 1.2l1.25 -1.2l1.25 1.2l1.25 -1.2l1.25 1.2l1.25 -1.2l1.25 1.2l1.25 -1.2l1.25 1.2l1.25 -1.2l1.25 1.2l1.25 -1.2l1.25 1.2l1.25 -1.2l1.25 1.2l1.25 -1.2l1.25 1.2l1.25 -1.2l1.25 1.2l1.25 -1.2l1.25 1.2l1.25 -1.2l1.25 1.2l1.25 -1.2l1.25 1.2l1.25 -1.2l1.25 1.2l1.25 -1.2l1.25 1.2l1.25 -1.2l1.25 1.2l1.25 -1.2l1.25 1.2l1.25 -1.2l1.25 1.2l1.25 -1.2l1.25 1.2l1.25 -1.2l1.25 1.2l1.25 -1.2l1.25 1.2l1.25 -1.2l1.25 1.2l1.25 -1.2l1.25 1.2l1.25 -1.2l1.25 1.2l1.25 -1.2l1.25 1.2l1.25 -1.2l1.25 1.2l1.25 -1.2l1.25 1.2l1.25 -1.2l1.25 1.2l1.25 -1.2l1.25 1.2l1.25 -1.2l1.25 1.2l1.25 -1.2l1.25 1.2l1.25 -1.2l1.25 1.2l1.25 -1.2l1.25 1.2l1.25 -1.2l1.25 1.2l1.25 -1.2l1.25 1.2l1.25 -1.2l1.25 1.2l1.25 -1.2l1.25 1.2l1.25 -1.2l1.25 1.2l1.25 -1.2l1.25 1.2l1.25 -1.2l1.25 1.2l1.25 -1.2l1.25 1.2l1.25 -1.2l1.25 1.2l1.25 -1.2l1.25 1.2l1.25 -1.2l1.25 1.2l1.25 -1.2l1.25 1.2l1.25 -1.2l1.25 1.2l1.25 -1.2l1.25 1.2l1.25 -1.2l1.25 1.2l1.25 -1.2l1.25 1.2l1.25 -1.2l1.25 1.2l1.25 -1.2l1.25 1.2l1.25 -1.2l1.25 1.2l1.25 -1.2l1.25 1.2l1.25 -1.2l1.25 1.2l1.25 -1.2l1.25 1.2l1.25 -1.2l1.25 1.2l1.25 -1.2l1.25 1.2l1.25 -1.2l1.25 1.2l1.25 -1.2l1.25 1.2l1.25 -1.2l1.25 1.2l1.25 -1.2l1.25 1.2l1.25 -1.2l1.25 1.2l1.25 -1.2l1.25 1.2l1.25 -1.2l1.25 1.2l1.25 -1.2l1.25 1.2l1.25 -1.2l1.25 1.2l1.25 -1.2l1.25 1.2l1.25 -1.2l1.25 1.2l1.25 -1.2l1.25 1.2l1.25 -1.2l1.25 1.2l1.25 -1.2l1.25 1.2l1.25 -1.2l1.25 1.2l1.25 -1.2l1.25 1.2l1.25 -1.2l1.25 1.2l1.25 -1.2l1.25 1.2l1.25 -1.2l1.25 1.2l1.25 -1.2l1.25 1.2l1.25 -1.2l1.25 1.2l1.25 -1.2l1.25 1.2l1.25 -1.2l1.25 1.2l1.25 -1.2l1.25 1.2l1.25 -1.2l1.25 1.2l1.25 -1.2l1.25 1.2l1.25 -1.2l1.25 1.2l1.25 -1.2l1.25 1.2l1.25 -1.2l1.25 1.2l1.25 -1.2l1.25 1.2l1.25 -1.2l1.25 1.2l1.25 -1.2l1.25 1.2l1.25 -1.2l1.25 1.2l1.25 -1.2l1.25 1.2l1.25 -1.2l1.25 1.2l1.25 -1.2l1.25 1.2l1.25 -1.2l1.25 1.2l1.25 -1.2l1.25 1.2l1.25 -1.2l1.25 1.2l1.25 -1.2l1.25 1.2l1.25 -1.2l1.25 1.2l1.25 -1.2l1.25 1.2l1.25 -1.2" fill="none" stroke="#f0643c" stroke-width="0.9" opacity="0.85"/></svg>

</body></html>
